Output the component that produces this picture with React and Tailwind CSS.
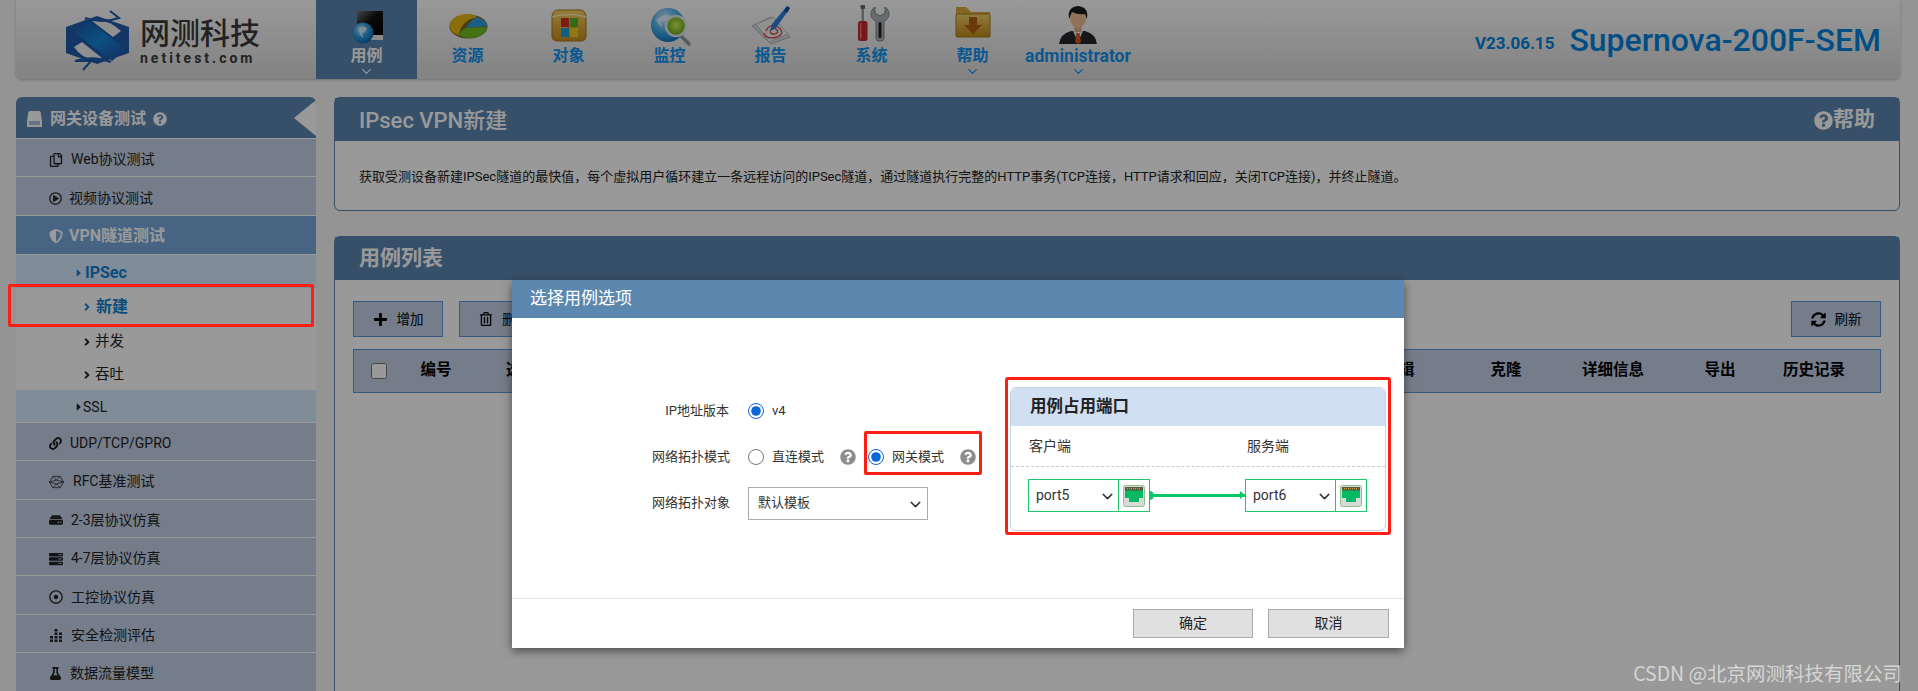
import React from "react";
import { ChevronDown } from "lucide-react";
import {
  FaAngleRight,
  FaCaretRight,
  FaFlask,
  FaHdd,
  FaLink,
  FaPlus,
  FaQuestionCircle,
  FaRegCopy,
  FaRegDotCircle,
  FaRegPlayCircle,
  FaRegTrashAlt,
  FaServer,
  FaShieldAlt,
  FaSyncAlt,
} from "react-icons/fa";

const LogoMark = () => (
  <svg width="72" height="64" viewBox="60 9 72 64" className="shrink-0">
    <defs>
      <linearGradient id="logoBand" x1="0" y1="0" x2="1" y2="1">
        <stop offset="0" stopColor="#1d4f9c" />
        <stop offset="0.5" stopColor="#1585d8" />
        <stop offset="1" stopColor="#1d4f9c" />
      </linearGradient>
    </defs>
    <polygon points="96,17 128,28 128,54 96,65 65,54 65,28" fill="#1f5aa8" />
    <path d="M91 22 Q107 19 120 32 L112 38 Z" fill="#efefef" />
    <path d="M73 48 L81 43 L101 59 Q84 64 73 48 Z" fill="#efefef" />
    <polygon points="71,32 85,20 125,50 111,62" fill="url(#logoBand)" />
    <path d="M84 19 Q100 25 118 19 L109 12" fill="none" stroke="#1f5aa8" strokeWidth="2" />
    <path d="M74 62 Q92 56 110 63 M74 62 L90 62 L82 71" fill="none" stroke="#1f5aa8" strokeWidth="2" />
  </svg>
);

const CaseIcon = () => (
  <svg width="44" height="44" viewBox="0 0 44 44">
    <defs>
      <linearGradient id="screen" x1="0" y1="0" x2="1" y2="1">
        <stop offset="0" stopColor="#777" />
        <stop offset="0.45" stopColor="#111" />
        <stop offset="1" stopColor="#000" />
      </linearGradient>
      <radialGradient id="ball" cx="0.4" cy="0.35" r="0.7">
        <stop offset="0" stopColor="#b8e4ff" />
        <stop offset="0.5" stopColor="#2e9be0" />
        <stop offset="1" stopColor="#0a5ea8" />
      </radialGradient>
    </defs>
    <rect x="12" y="7" width="26" height="24" rx="1" fill="url(#screen)" />
    <rect x="14" y="31" width="24" height="5" fill="#e8e8e8" />
    <circle cx="18" cy="29" r="10.5" fill="url(#ball)" />
    <path d="M13 24 q5 -3 9 0 l-2 4 l-3 1 l1 5 l-3 -3 Z" fill="#d9f1ff" opacity="0.8" />
  </svg>
);

const ResourceIcon = () => (
  <svg width="44" height="44" viewBox="0 0 44 44">
    <ellipse cx="22.5" cy="22.5" rx="19" ry="12" fill="#7a6a20" />
    <path d="M4 22 C4 12 18 8 28 11 L31 13 C20 15 14 22 13 31 C8 30 4 27 4 22 Z" fill="#e8b714" />
    <path d="M31 13 L39 17 Q42 20 41 22 L20 24 C23 19 26 15 31 13 Z" fill="#2f9fe0" />
    <path d="M13 31 C14 28 17 25 20 24 L41 23 C40 29 33 34 24 34 C20 34 16 33 13 31 Z" fill="#6fbe1f" />
  </svg>
);

const ObjectIcon = () => (
  <svg width="44" height="44" viewBox="0 0 44 44">
    <defs>
      <linearGradient id="box" x1="0" y1="0" x2="0" y2="1">
        <stop offset="0" stopColor="#f4cf66" />
        <stop offset="1" stopColor="#c98f1c" />
      </linearGradient>
    </defs>
    <path d="M5 14 Q5 6 11 6 L33 6 Q39 6 39 14 L39 32 Q39 37 34 37 L10 37 Q5 37 5 32 Z" fill="url(#box)" stroke="#a87818" />
    <path d="M5 13 Q22 8 39 13" fill="none" stroke="#fff1b8" strokeWidth="1.5" />
    <rect x="14" y="14" width="8" height="9" fill="#d42a1e" />
    <rect x="23" y="14" width="8" height="9" fill="#55b520" />
    <rect x="14" y="24" width="8" height="9" fill="#1f9fdc" />
    <rect x="23" y="24" width="8" height="9" fill="#f1cb1c" />
  </svg>
);

const MonitorIcon = () => (
  <svg width="44" height="44" viewBox="0 0 44 44">
    <defs>
      <radialGradient id="mball" cx="0.4" cy="0.3" r="0.8">
        <stop offset="0" stopColor="#d5f1ff" />
        <stop offset="0.55" stopColor="#35a6e6" />
        <stop offset="1" stopColor="#0a63b0" />
      </radialGradient>
      <radialGradient id="lens" cx="0.5" cy="0.45" r="0.55">
        <stop offset="0" stopColor="#d0f05a" />
        <stop offset="1" stopColor="#5fa512" />
      </radialGradient>
    </defs>
    <circle cx="20" cy="21" r="17" fill="url(#mball)" />
    <path d="M8 16 q8 -7 16 -4 l-4 4 l-7 2 l1 6 Z" fill="#e8f8ff" opacity="0.75" />
    <line x1="32" y1="31" x2="41" y2="40" stroke="#8c97a0" strokeWidth="3.5" strokeLinecap="round" />
    <circle cx="28" cy="22" r="10" fill="url(#lens)" stroke="#dfe7ec" strokeWidth="2.5" />
  </svg>
);

const ReportIcon = () => (
  <svg width="44" height="44" viewBox="0 0 44 44">
    <polygon points="3,22 22,13 41,33 22,40" fill="#d5d8dc" stroke="#aab0b6" />
    <polygon points="7,20 24,13 39,30 20,38" fill="#eef0f2" stroke="#b7bcc2" />
    <path d="M17 27 q3 -8 12 -4 q8 6 -1 10 q-11 3 -13 -4 M21 27 q2 -4 6 -2 q4 3 -1 5 q-4 1 -5 -3" fill="none" stroke="#d8443c" strokeWidth="1.3" />
    <path d="M38 2 L41 4 L27 24 L21 27 L23 20 Z" fill="#2f7fd8" />
    <path d="M38 2 L41 4 L38 9 L35 7 Z" fill="#174f9c" />
  </svg>
);

const SystemIcon = () => (
  <svg width="44" height="44" viewBox="0 0 44 44">
    <rect x="11.5" y="3" width="2.5" height="14" fill="#9aa0a6" />
    <rect x="10.5" y="1" width="4.5" height="4" rx="1" fill="#666" />
    <rect x="8" y="17" width="9.5" height="20" rx="2.5" fill="#c92a2a" />
    <rect x="10" y="19" width="1.5" height="16" fill="#e87070" />
    <path d="M25 3 C19 7 20 15 26 17 L26 34 Q26 37 29 37 L31 37 Q34 37 34 34 L34 17 C40 15 41 7 35 3 L35 9 L30 12 L25 9 Z" fill="#aab2b8" stroke="#7d858b" />
    <rect x="28.5" y="18" width="3" height="16" rx="1.5" fill="#222" />
  </svg>
);

const HelpFolderIcon = () => (
  <svg width="44" height="44" viewBox="0 0 44 44">
    <defs>
      <linearGradient id="folder" x1="0" y1="0" x2="0" y2="1">
        <stop offset="0" stopColor="#f0cf6b" />
        <stop offset="1" stopColor="#c08a1a" />
      </linearGradient>
    </defs>
    <path d="M5 3 L15 3 L20 8 L39 8 L39 12 L5 12 Z" fill="#d9ab3c" />
    <rect x="5" y="10" width="34" height="23" rx="1" fill="url(#folder)" stroke="#a77a1a" />
    <path d="M18 13 L26 13 L26 21 L31 21 L22 30 L13 21 L18 21 Z" fill="#b25f12" />
  </svg>
);

const UserIcon = () => (
  <svg width="44" height="44" viewBox="0 0 44 44">
    <path d="M3 40 Q4 30 15 27 L29 27 Q40 30 41 40 Z" fill="#23262b" />
    <polygon points="17,27 27,27 22,38" fill="#e8eef2" />
    <polygon points="20.5,29 23.5,29 25,38 22,40 19,38" fill="#d85a1c" />
    <rect x="18.5" y="21" width="7" height="7" fill="#e0ab80" />
    <ellipse cx="22" cy="14" rx="8" ry="10" fill="#edc095" />
    <path d="M13 15 Q11 3 22 2 Q33 3 31 15 L29 10 Q22 11 16 8 Z" fill="#1c1c1c" />
  </svg>
);

const PortIcon = () => (
  <svg width="22" height="22" viewBox="0 0 22 22">
    <rect x="0.5" y="0.5" width="21" height="21" rx="2" fill="#d8dad8" stroke="#8cc08c" />
    <polygon points="2,2 20,2 20,13 16,13 16,17 6,17 6,13 2,13" fill="#08b864" />
    <rect x="2" y="2" width="18" height="3.5" fill="#5a5a3a" />
    <line x1="4" y1="3.7" x2="18" y2="3.7" stroke="#d8b040" strokeDasharray="1 1" />
  </svg>
);

const FormIcon = () => (
  <svg width="15" height="16" viewBox="0 0 15 16" fill="currentColor">
    <path d="M3 0 L12 0 Q13.5 0 13.8 2 L15 10 L15 16 L0 16 L0 10 L1.2 2 Q1.5 0 3 0 Z" />
    <path d="M2 11 H13 M2 13 H13" stroke="#5a85af" strokeWidth="1" />
  </svg>
);

const DotsIcon = () => (
  <svg width="14" height="14" viewBox="0 0 14 14" fill="#222">
    <rect x="5.5" y="1" width="3" height="2.5" />
    <rect x="5.5" y="4.5" width="3" height="2.5" />
    <rect x="5.5" y="8" width="3" height="2.5" />
    <rect x="5.5" y="11.5" width="3" height="2.5" />
    <rect x="1" y="8" width="3" height="2.5" />
    <rect x="1" y="11.5" width="3" height="2.5" />
    <rect x="10" y="4.5" width="3" height="2.5" />
    <rect x="10" y="8" width="3" height="2.5" />
    <rect x="10" y="11.5" width="3" height="2.5" />
  </svg>
);

const HexIcon = () => (
  <svg width="16" height="14" viewBox="0 0 16 14" fill="none" stroke="#333" strokeWidth="0.9">
    <polygon points="4,1 12,1 15.5,7 12,13 4,13 0.5,7" />
    <path d="M4 1 L8 5 L12 1 M0.5 7 L8 5 L15.5 7 M4 13 L8 9 L12 13 M0.5 7 L8 9 L15.5 7" />
  </svg>
);

const navItems = [
  { label: "用例", icon: <CaseIcon />, active: true, chevron: true },
  { label: "资源", icon: <ResourceIcon /> },
  { label: "对象", icon: <ObjectIcon /> },
  { label: "监控", icon: <MonitorIcon /> },
  { label: "报告", icon: <ReportIcon /> },
  { label: "系统", icon: <SystemIcon /> },
  { label: "帮助", icon: <HelpFolderIcon />, chevron: true },
];

const NavTab = ({ label, icon, active, chevron, wide }) => (
  <div className={`flex h-full flex-col items-center pt-1 ${wide ? "w-[110px]" : "w-[101px]"} ${active ? "bg-[#5a85af] text-white" : "text-[#0f93f0]"}`}>
    <div className="h-[44px]">{icon}</div>
    <div className={`font-bold leading-4 ${wide ? "text-[17.5px]" : "text-[16px]"}`}>{label}</div>
    {chevron && <ChevronDown size={15} strokeWidth={2} />}
  </div>
);

const SideRow = ({ icon, label, gap }) => (
  <div className="flex h-[38.4px] items-center border-b border-white bg-[#c3d0e6] pl-[33px] pt-[4px] text-[14px] text-[#222]">
    <span className="flex w-[15px] justify-start">{icon}</span>
    <span className={gap}>{label}</span>
  </div>
);

const SubRow = ({ label, bold, big }) => (
  <div className={`flex items-center bg-white pl-[65px] pt-[4px] ${big ? "h-[35px]" : "h-[33.5px]"}`}>
    <FaAngleRight size={12} className={bold ? "text-[#0f7fd0]" : "text-[#222]"} />
    <span className={bold ? "ml-[3px] text-[16px] font-bold text-[#0f7fd0]" : "ml-[2px] text-[14.5px] text-[#222]"}>{label}</span>
  </div>
);

const Sidebar = () => (
  <aside className="relative w-[300px] shrink-0 overflow-hidden rounded-t-md">
    <div className="flex h-[42px] items-center border-b border-white bg-[#5a85af] pl-[11px] pt-[3px] text-white">
      <FormIcon />
      <span className="ml-2 text-[16px] font-bold">网关设备测试</span>
      <FaQuestionCircle size={14} className="ml-[7px]" />
    </div>
    <div className="absolute right-0 top-[3px] h-0 w-0 border-y-[18px] border-r-[22px] border-y-transparent border-r-white"></div>
    <SideRow icon={<FaRegCopy size={14} />} label="Web协议测试" gap="ml-[7px]" />
    <SideRow icon={<FaRegPlayCircle size={13} />} label="视频协议测试" gap="ml-[5px]" />
    <div className="flex h-[39px] items-center border-b border-white bg-[#78a7da] pl-[33px] pt-[3px] text-white">
      <FaShieldAlt size={14} />
      <span className="ml-[6px] text-[16px] font-bold">VPN隧道测试</span>
    </div>
    <div className="flex h-[33px] items-center bg-[#d5e9fd] pl-[57px] pt-[3px] text-[#0f7fd0]">
      <FaCaretRight size={12} />
      <span className="ml-0 text-[16px] font-bold">IPSec</span>
    </div>
    <SubRow label="新建" bold big />
    <SubRow label="并发" />
    <SubRow label="吞吐" />
    <div className="flex h-[33px] items-center border-b border-white bg-[#d5e9fd] pl-[57px] pt-[3px] text-[14px] text-[#222]">
      <FaCaretRight size={12} />
      <span className="-ml-[2px]">SSL</span>
    </div>
    <SideRow icon={<FaLink size={13} />} label="UDP/TCP/GPRO" gap="ml-[6px]" />
    <SideRow icon={<HexIcon />} label="RFC基准测试" gap="ml-[9px]" />
    <SideRow icon={<FaHdd size={14} />} label="2-3层协议仿真" gap="ml-[7px]" />
    <SideRow icon={<FaServer size={14} />} label="4-7层协议仿真" gap="ml-[7px]" />
    <SideRow icon={<FaRegDotCircle size={14} />} label="工控协议仿真" gap="ml-[7px]" />
    <SideRow icon={<DotsIcon />} label="安全检测评估" gap="ml-[7px]" />
    <SideRow icon={<FaFlask size={13} />} label="数据流量模型" gap="ml-[6px]" />
  </aside>
);

const ToolButton = ({ icon, label }) => (
  <div className="flex h-9 w-[90px] items-center justify-center gap-[9px] border border-[#5e96d5] bg-[#c3d0e6] text-[13.5px] text-black">
    {icon}
    <span>{label}</span>
  </div>
);

const SelectBox = ({ value, className, right }) => (
  <div className={`relative ${className}`}>
    <select defaultValue={value} className="h-full w-full appearance-none bg-transparent pl-[7px] text-[#333]">
      <option>{value}</option>
    </select>
    <ChevronDown size={17} strokeWidth={2} className={`pointer-events-none absolute top-[8px] text-[#333] ${right}`} />
  </div>
);

const PortSelect = ({ value }) => (
  <div className="flex h-[33px] w-[122px] border border-[#1dc86a] bg-white">
    <SelectBox value={value} className="w-[89px] text-[14px]" right="right-[2px]" />
    <div className="flex flex-1 items-center justify-center border-l border-[#1dc86a]">
      <PortIcon />
    </div>
  </div>
);

const Modal = () => (
  <div className="absolute left-[512px] top-[280px] z-20 flex h-[368px] w-[892px] flex-col bg-white shadow-[0_3px_9px_rgba(0,0,0,0.5)]">
    <div className="flex h-[38px] shrink-0 items-center bg-[#5c87af] pl-[18px] text-[17px] text-white">选择用例选项</div>
    <div className="relative flex h-[281px] shrink-0 border-b border-[#e5e5e5] pt-[69px] text-[13px] text-[#333]">
      <div className="w-[498px] shrink-0 pt-[1px]">
        <div className="flex h-[46px] items-center">
          <label className="w-[217px] text-right">IP地址版本</label>
          <input type="radio" name="ipver" defaultChecked className="ml-[19px] h-4 w-4 accent-[#0a66d8]" />
          <span className="ml-2">v4</span>
        </div>
        <div className="relative flex h-[46px] items-center">
          <label className="w-[218px] text-right">网络拓扑模式</label>
          <input type="radio" name="topo" className="ml-[18px] h-4 w-4" />
          <span className="ml-2 w-[58px]">直连模式</span>
          <FaQuestionCircle size={16} className="ml-[10px] text-[#8c8c8c]" />
          <input type="radio" name="topo" defaultChecked className="ml-[12px] h-4 w-4 accent-[#0a66d8]" />
          <span className="ml-2 w-[58px]">网关模式</span>
          <FaQuestionCircle size={16} className="ml-[10px] text-[#8c8c8c]" />
          <div className="absolute left-[352px] top-[-3px] z-30 h-[44px] w-[118px] rounded-[2px] border-[3px] border-[#ff1e14]"></div>
        </div>
        <div className="flex h-[46px] items-center">
          <label className="w-[218px] text-right">网络拓扑对象</label>
          <SelectBox value="默认模板" className="ml-[18px] h-[33px] w-[180px] border border-[#aaa] bg-white text-[13px] [&>select]:pl-[9px]" right="right-[3px]" />
        </div>
      </div>
      <div className="relative h-[144px] w-[376px] shrink-0 overflow-visible rounded-md border border-[#c4d2e4]">
        <div className="flex h-[38px] items-center rounded-t-md bg-[#d0dff2] pl-[19px] text-[16.5px] font-bold text-[#222]">用例占用端口</div>
        <div className="flex h-[41px] items-center border-b border-dashed border-[#ccc] pl-[18px] text-[14px] text-[#333]">
          <span className="w-[218px]">客户端</span>
          <span>服务端</span>
        </div>
        <div className="flex items-center pl-[17px] pt-[12px]">
          <PortSelect value="port5" />
          <div className="relative h-[3px] w-[95px] bg-[#06c766]">
            <span className="absolute -left-[1px] -top-[3px] h-[9px] w-[5px] rounded-r-full bg-[#06c766]"></span>
            <span className="absolute right-0 -top-[3px] h-0 w-0 border-y-[4.5px] border-l-[5px] border-y-transparent border-l-[#06c766]"></span>
          </div>
          <PortSelect value="port6" />
        </div>
        <div className="absolute -bottom-[5px] -left-[6px] -right-[6px] -top-[11px] rounded-[3px] border-[3px] border-[#ff1e14]"></div>
      </div>
    </div>
    <div className="flex flex-1 items-center justify-end gap-[15px] pr-[15px]">
      <button className="h-[29px] w-[120px] border border-[#aaa] bg-[#e0e0e0] text-[14px] text-[#222]">确定</button>
      <button className="h-[29px] w-[121px] border border-[#aaa] bg-[#e0e0e0] text-[14px] text-[#222]">取消</button>
    </div>
  </div>
);

const App = () => {
  return (
    <div className="relative h-[691px] overflow-hidden bg-[#f7f7f7] pl-4 pr-[18px] font-[Roboto,'Noto_Sans_CJK_SC',sans-serif]">
      <header className="flex h-[79px] items-center rounded-b-md bg-gradient-to-b from-white to-[#dadada] shadow-[0_1px_3px_rgba(0,0,0,0.25)]">
        <div className="flex h-full w-[300px] shrink-0 items-center pl-[45px]">
          <LogoMark />
          <div className="ml-[7px] mt-[5px] flex flex-col">
            <span className="text-[30px] font-medium leading-[32px] text-[#3a3a3a]">网测科技</span>
            <span className="text-[14px] font-bold leading-[16px] tracking-[3px] text-[#3a3a3a]">netitest.com</span>
          </div>
        </div>
        {navItems.map((item) => (
          <NavTab key={item.label} {...item} />
        ))}
        <NavTab label="administrator" icon={<UserIcon />} chevron wide />
        <div className="flex flex-1 items-center justify-end pr-[19px] text-[#0083dd]">
          <span className="mt-[9px] text-[17px] font-bold">V23.06.15</span>
          <span className="ml-[15px] text-[32px] font-medium leading-[36px]">Supernova-200F-SEM</span>
        </div>
      </header>

      <div className="mt-[18px] flex gap-[18px]">
        <Sidebar />
        <main className="min-w-0 flex-1">
          <section className="rounded-md border border-[#5a85af] bg-white">
            <div className="flex h-[43px] items-center justify-between bg-[#5a85af] pl-6 pr-[24px] pt-[1px] text-white">
              <span className="text-[22px] font-medium">IPsec VPN新建</span>
              <span className="flex items-center text-[21px] font-bold">
                <FaQuestionCircle size={19} />
                帮助
              </span>
            </div>
            <div className="flex h-[69px] items-center pl-6 pt-[3px] text-[13px] text-[#222]">
              获取受测设备新建IPSec隧道的最快值，每个虚拟用户循环建立一条远程访问的IPSec隧道，通过隧道执行完整的HTTP事务(TCP连接，HTTP请求和回应，关闭TCP连接)，并终止隧道。
            </div>
          </section>

          <section className="mt-[25px] h-[500px] rounded-md border border-[#5a85af] bg-white">
            <div className="flex h-[43px] items-center bg-[#5a85af] pl-6 pt-[1px] text-[21px] font-bold text-white">用例列表</div>
            <div className="px-[18px] pt-[21px]">
              <div className="flex items-center justify-between">
                <div className="flex gap-4">
                  <ToolButton icon={<FaPlus size={15} />} label="增加" />
                  <ToolButton icon={<FaRegTrashAlt size={14} />} label="删除" />
                </div>
                <ToolButton icon={<FaSyncAlt size={15} />} label="刷新" />
              </div>
              <div className="mt-3 flex h-[44px] items-center border border-[#5e96d5] bg-[#c3d0e6] text-center text-[15.5px] font-bold text-black">
                <div className="flex w-[50px] justify-center">
                  <input type="checkbox" className="h-4 w-4" />
                </div>
                <div className="w-[64px]">编号</div>
                <div className="flex-1 pl-[38px] text-left">选项</div>
                <div className="w-[158px]">编辑</div>
                <div className="w-[56px]">克隆</div>
                <div className="w-[158px]">详细信息</div>
                <div className="w-[56px]">导出</div>
                <div className="w-[132px]">历史记录</div>
              </div>
            </div>
          </section>
        </main>
      </div>

      <div className="absolute inset-0 z-10 bg-black/40"></div>
      <Modal />
      <div className="absolute left-2 top-[284px] z-30 h-[43px] w-[306px] rounded-[2px] border-[3px] border-[#ff1e14]"></div>
      <div className="absolute bottom-[6px] right-4 z-40 font-['Noto_Sans_CJK_SC',sans-serif] text-[19.5px] leading-6 text-white/60">CSDN @北京网测科技有限公司</div>
    </div>
  );
};

export default App;
